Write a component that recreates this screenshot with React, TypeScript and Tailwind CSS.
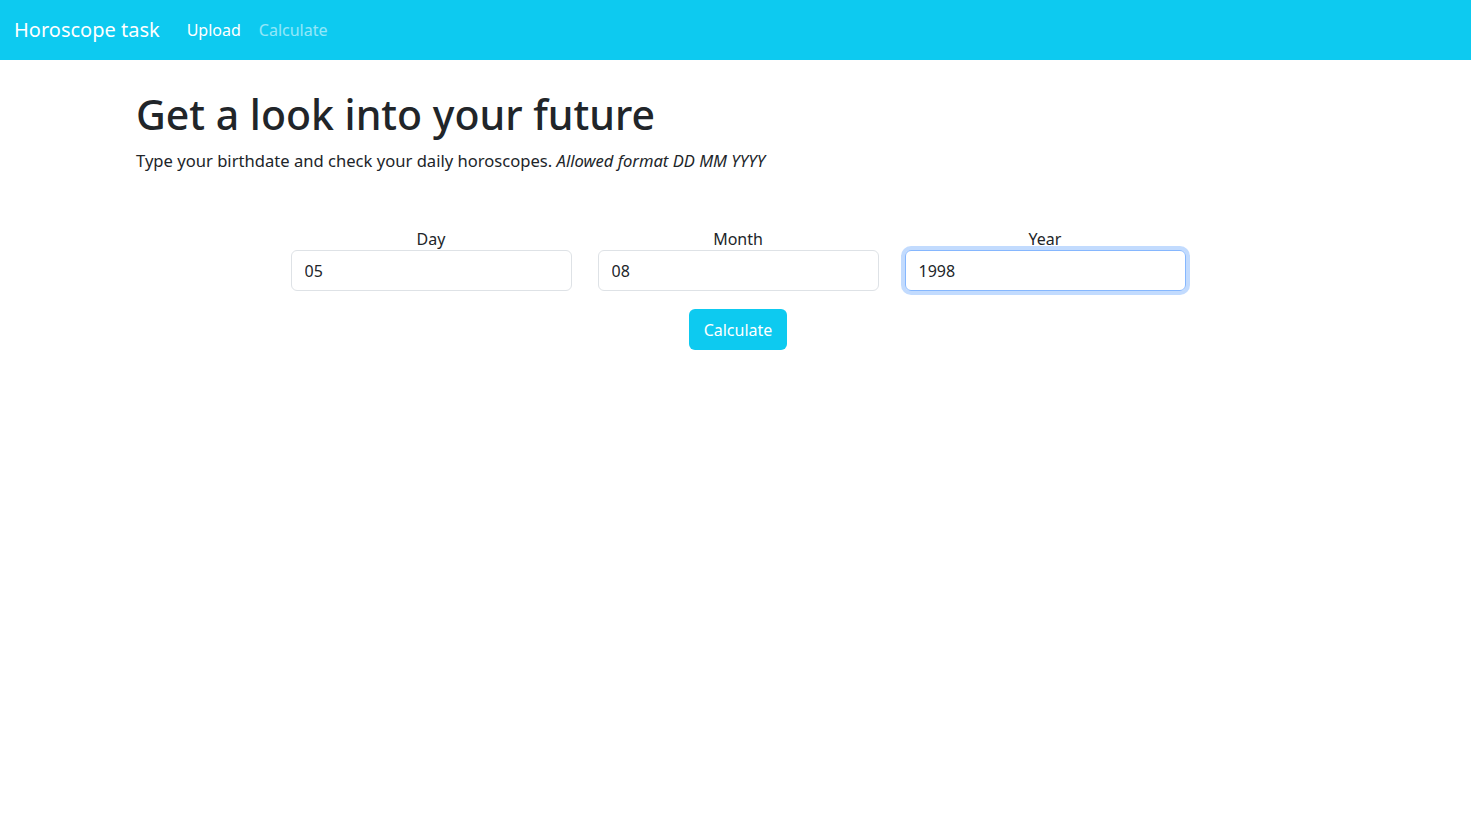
import { useState } from "react";

const font = { fontFamily: '"Noto Sans", "Open Sans", sans-serif' };

function Field({ label, value, focused }: { label: string; value: string; focused?: boolean }) {
  const [v, setV] = useState(value);
  return (
    <div className="flex flex-col items-center w-[281px]">
      <label className="text-[16px] leading-[22px] text-[#212529]">{label}</label>
      <input
        value={v}
        onChange={(e) => setV(e.target.value)}
        className={
          focused
            ? "w-full h-[41px] px-[13px] rounded-[6px] border border-[#86b7fe] text-[16px] text-[#212529] outline-none shadow-[0_0_0_4px_rgba(13,110,253,0.25)]"
            : "w-full h-[41px] px-[13px] rounded-[6px] border border-[#dee2e6] text-[16px] text-[#212529] outline-none"
        }
      />
    </div>
  );
}

export default function App() {
  return (
    <div className="min-h-screen bg-white" style={font}>
      <nav className="h-[60px] bg-[#0dcaf0] flex items-center px-[14px]">
        <span className="text-white text-[20px] mr-[27px]">Horoscope task</span>
        <span className="text-white text-[16px] mr-[18px]">Upload</span>
        <span className="text-white/55 text-[16px]">Calculate</span>
      </nav>

      <div className="pl-[136px] pt-[26px]">
        <h1 className="text-[41px] leading-[56px] font-medium text-[#212529]">Get a look into your future</h1>
        <p className="text-[16.6px] leading-[24px] text-[#212529] mt-[7px]">
          Type your birthdate and check your daily horoscopes. <em>Allowed format DD MM YYYY</em>
        </p>
      </div>

      <div className="flex justify-center mt-[55px]">
        <div className="flex flex-col items-center ml-[5px]">
          <div className="flex gap-[26px]">
            <Field label="Day" value="05" />
            <Field label="Month" value="08" />
            <Field label="Year" value="1998" focused />
          </div>
          <button className="mt-[18px] h-[41px] w-[98px] rounded-[6px] bg-[#0dcaf0] text-white text-[16px]">
            Calculate
          </button>
        </div>
      </div>
    </div>
  );
}
